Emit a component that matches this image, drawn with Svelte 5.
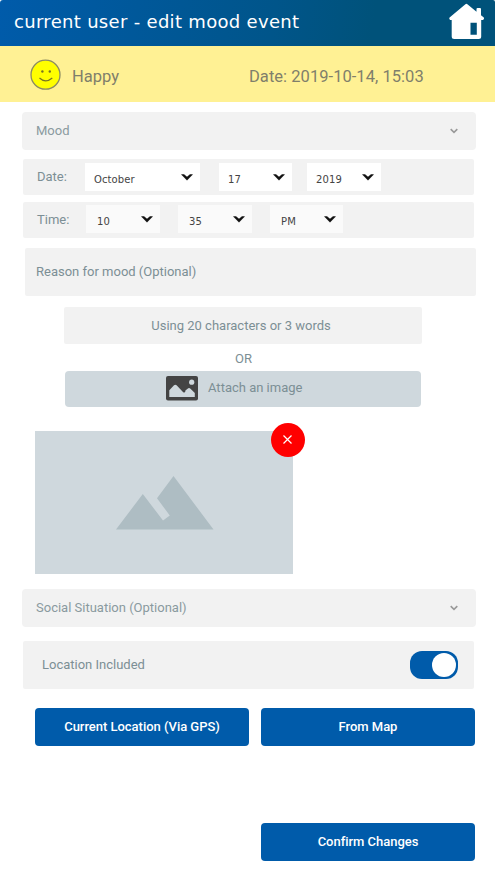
<script>
  const dateFields = [
    { value: 'October', width: 115, gap: 0 },
    { value: '17', width: 73, gap: 19 },
    { value: '2019', width: 74, gap: 15 }
  ];
  const timeFields = [
    { value: '10', width: 74, gap: 0 },
    { value: '35', width: 74, gap: 18 },
    { value: 'PM', width: 73, gap: 18 }
  ];
</script>

{#snippet chevron()}
  <svg class="chevron" width="8" height="6" viewBox="0 0 8 6"><path d="M.7 1.1 4 4.3 7.3 1.1" fill="none" stroke="#999" stroke-width="1.6" /></svg>
{/snippet}

{#snippet picker(field)}
  <div class="picker" style="width: {field.width}px; margin-left: {field.gap}px">
    <span>{field.value}</span>
    <svg width="12" height="7" viewBox="0 0 12 7"><path d="M.5 .6H3L6 3 9 .6H11.5L6 6.2Z" fill="#111" stroke="#111" stroke-width=".5" /></svg>
  </div>
{/snippet}

<div class="screen">
  <header>
    <h1>current user - edit mood event</h1>
    <svg class="home" width="36" height="36" viewBox="0 0 36 36">
      <path fill="#fff" fill-rule="evenodd" d="M18.4 1.2 27.5 8.7V6Q27.5 5 28.5 5H31Q32 5 32 6V12.2L34.8 14.5Q35.5 16 34 17H32.2V33.5Q32.2 36 29.7 36H5.2Q2.7 36 2.7 33.5V17H1.2Q-.3 15.8 .6 14.5L16.4 1.2Q17.4.3 18.4 1.2ZM21.5 19.8V31.8H27.8V19.8Z" />
    </svg>
  </header>

  <section class="summary">
    <svg width="32" height="32" viewBox="0 0 32 32">
      <circle cx="16.5" cy="15.7" r="14.5" fill="#ff0" stroke="#8b8b62" stroke-width="1.3" />
      <circle cx="13.4" cy="12.5" r="1.2" fill="#777425" /><circle cx="20.8" cy="12.5" r="1.2" fill="#777425" />
      <path d="M10.5 19Q16.5 24.7 23.3 19" fill="none" stroke="#777425" stroke-width="1.2" />
    </svg>
    <span class="mood">Happy</span>
    <span class="when">Date: 2019-10-14, 15:03</span>
  </section>

  <main>
    <div class="dropdown first"><span>Mood</span>{@render chevron()}</div>
    <div class="row date"><span class="label">Date:</span>{#each dateFields as f}{@render picker(f)}{/each}</div>
    <div class="row time"><span class="label">Time:</span>{#each timeFields as f}{@render picker(f)}{/each}</div>
    <div class="reason">Reason for mood (Optional)</div>
    <div class="hint">Using 20 characters or 3 words</div>
    <div class="or">OR</div>
    <div class="attach">
      <svg width="32" height="25" viewBox="0 0 32 25">
        <rect width="32" height="24.5" rx="2" fill="#444" />
        <circle cx="25.7" cy="6.2" r="2.6" fill="#cfd8dd" />
        <path fill="#cfd8dd" d="M3.3 21V14.3L8 9.3Q9.3 8.2 10.6 9.3L17.2 16.2Q19.5 17.3 19.4 14.6L21.6 12.7Q23 11.5 24.5 12.7L28.8 17V21Z" />
      </svg>
      <span>Attach an image</span>
    </div>
    <div class="preview">
      <svg width="98" height="54" viewBox="0 0 98 54"><path fill="#aebdc3" d="M0 53.5 26.8 18 47 44.5 53.8 39.5 41 22.3 57.5 0 97.5 53.5Z" /></svg>
      <div class="remove"><svg width="9" height="9" viewBox="0 0 9 9"><path d="M.5.5 8.5 8.5M8.5.5.5 8.5" stroke="#fff" stroke-width="1.2" /></svg></div>
    </div>
    <div class="dropdown social"><span>Social Situation (Optional)</span>{@render chevron()}</div>
    <div class="location"><span>Location Included</span><div class="toggle"><i></i></div></div>
    <div class="actions"><button>Current Location (Via GPS)</button><button>From Map</button></div>
    <button class="confirm">Confirm Changes</button>
  </main>
</div>

<style>
  :global(body) { background: #fff; }
  .screen { width: 495px; height: 881px; overflow: hidden; background: #fff; font: 13px/16px Roboto, sans-serif; color: #7c8f95; box-sizing: border-box; }
  .screen * { box-sizing: border-box; }
  svg { display: block; flex: none; }
  header { height: 46px; display: flex; align-items: flex-start; justify-content: space-between; padding: 3px 10px 0 14px; background: linear-gradient(100deg, #005baa, #00558a 55%, #00527a 75%); border-top-left-radius: 3px; border-top-right-radius: 2px; }
  h1 { margin: 7px 0 0; font: 18px/24px "DejaVu Sans", sans-serif; letter-spacing: .31px; color: #fff; white-space: nowrap; }
  .summary { height: 56px; display: flex; align-items: flex-start; padding: 13px 0 0 29px; background: #fff194; color: #7f7f6b; font-size: 16.5px; line-height: 20px; white-space: nowrap; }
  .mood { width: 177px; margin: 8px 0 0 11px; }
  .when { margin-top: 8px; letter-spacing: .04px; }
  main { display: flex; flex-direction: column; align-items: flex-start; padding-top: 10px; }
  .dropdown { width: 454px; height: 38px; margin-left: 22px; padding: 0 18px 0 14px; display: flex; align-items: center; justify-content: space-between; background: #f2f2f2; border-radius: 4px; color: #8a9a9f; }
  .row { width: 451px; height: 36px; margin: 9px 0 0 23px; padding-left: 14px; display: flex; background: #f2f2f2; border-radius: 2px; }
  .label { width: 48px; margin-top: 10px; }
  .time { margin-top: 7px; }
  .time .label { width: 49px; }
  .picker { height: 28px; margin-top: 4px; padding: 2px 7px 0 9px; display: flex; align-items: center; justify-content: space-between; background: #fff; font: 10px/14px "DejaVu Sans", sans-serif; letter-spacing: .1px; color: #444; }
  .picker span { margin-top: 3px; }
  .picker svg { margin-top: -1px; }
  .time .picker { margin-top: 3px; padding-left: 11px; background: #fafafa; }
  .reason { width: 451px; height: 48px; margin: 10px 0 0 25px; padding: 16px 11px; background: #f2f2f2; border-radius: 2px; }
  .hint { width: 358px; height: 37px; margin: 11px 0 0 64px; padding-top: 11px; padding-right: 4px; text-align: center; background: #f2f2f2; border-radius: 2px; }
  .or { width: 487px; height: 16px; margin-top: 7px; text-align: center; }
  .attach { width: 356px; height: 36px; margin: 4px 0 0 65px; padding-left: 101px; display: flex; align-items: center; gap: 10px; background: #cfd8dd; border-radius: 4px; }
  .attach svg { margin-top: -1px; }
  .attach span { margin-top: -2px; }
  .preview { position: relative; width: 258px; height: 143px; margin: 24px 0 0 35px; padding: 45px 0 0 81px; background: #cfd8dd; }
  .remove { position: absolute; left: 236px; top: -8px; width: 34px; height: 34px; border-radius: 50%; background: #f00; display: flex; align-items: center; justify-content: center; padding: 0 1px 1px 0; }
  .social { margin-top: 15px; }
  .location { width: 451px; height: 48px; margin: 14px 0 0 23px; padding: 0 16px 0 19px; display: flex; align-items: center; justify-content: space-between; background: #f2f2f2; border-radius: 2px; }
  .toggle { width: 48px; height: 28px; padding: 2px; display: flex; justify-content: flex-end; border-radius: 12px; background: #005baa; }
  .toggle i { width: 24px; height: 24px; border-radius: 50%; background: #fff; }
  .actions { display: flex; gap: 12px; margin: 19px 0 0 35px; }
  button { width: 214px; height: 38px; padding: 0 0 1px; border: 0; border-radius: 4px; background: #005baa; color: #fff; font: 500 13px/16px Roboto, sans-serif; letter-spacing: -.03px; white-space: nowrap; }
  .confirm { margin: 77px 0 0 261px; }
</style>
